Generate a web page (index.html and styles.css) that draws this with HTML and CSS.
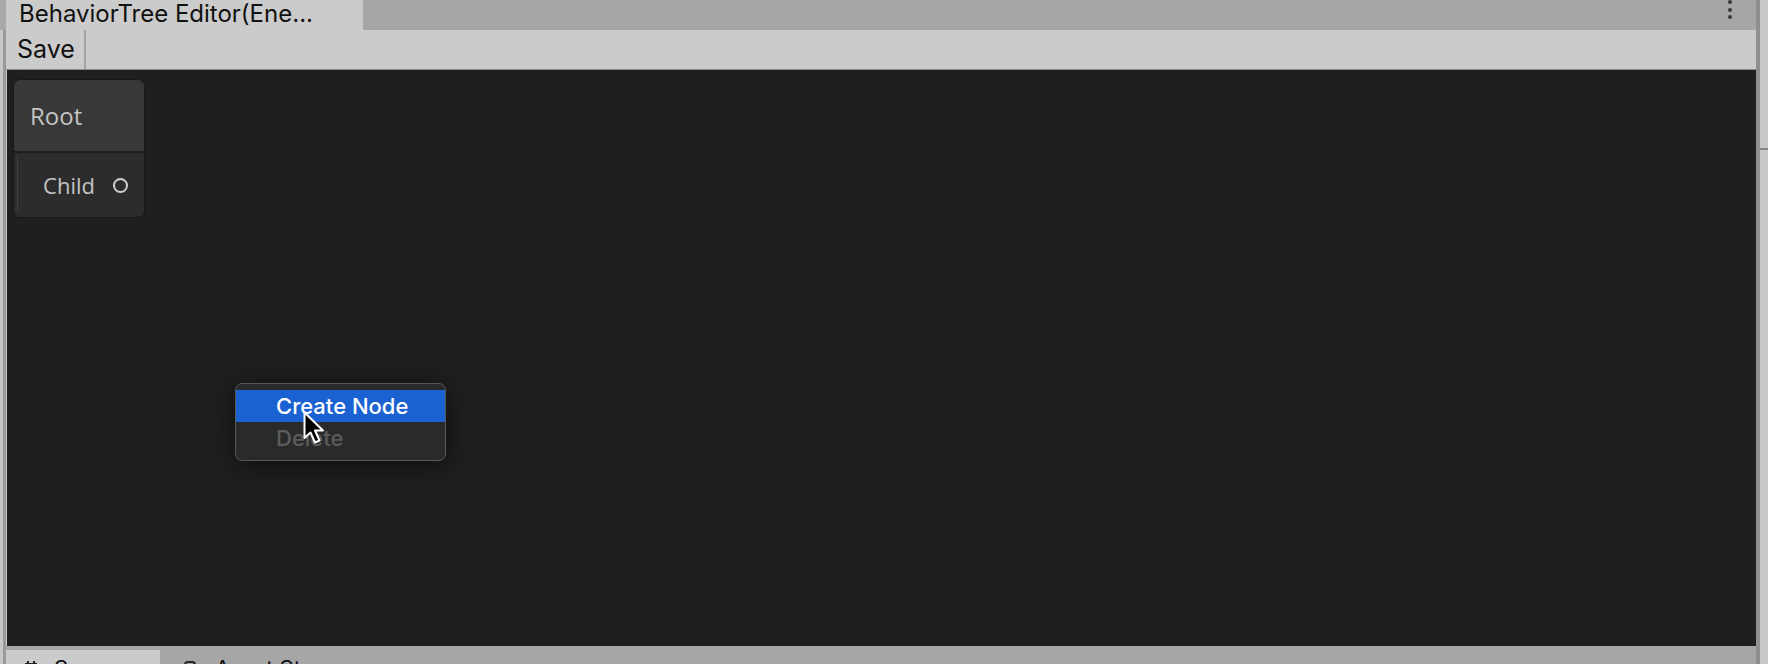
FILE: index.html
```html
<!DOCTYPE html>
<html>
<head>
<meta charset="utf-8">
<link rel="stylesheet" href="styles.css">
</head>
<body>
<div class="app">
  <div class="edge-left"><div class="edge-left-top"></div></div>
  <div class="main">
    <div class="tabbar">
      <div class="tab tab-active">BehaviorTree Editor(Ene...</div>
      <div class="spacer"></div>
      <div class="kebab"><span></span><span></span><span></span></div>
    </div>
    <div class="toolbar">
      <div class="tb-btn">Save</div>
    </div>
    <div class="canvas">
      <div class="node">
        <div class="node-title">Root</div>
        <div class="node-body">
          <div class="node-in"></div>
          <div class="node-out">
            <span class="port-label">Child</span>
            <span class="port"></span>
          </div>
        </div>
      </div>
      <div class="menu">
        <div class="menu-item menu-item-hl">Create Node</div>
        <div class="menu-item menu-item-disabled">Delete</div>
      </div>
      <svg class="cursor" width="26" height="36" viewBox="0 0 26 36">
        <path d="M1.5 1.5 L1.5 27 L7.5 21.5 L12 31.5 L16.5 29.5 L12 19.5 L20 19.5 Z" fill="#000" stroke="#fff" stroke-width="2" stroke-linejoin="round"/>
      </svg>
    </div>
    <div class="bottombar">
      <div class="btab btab-active">
        <svg class="btab-icon" width="14" height="14" viewBox="0 0 14 14"><path d="M4 1V13M10 1V13M1 4H13M1 10H13" stroke="#222" stroke-width="2" fill="none"/></svg>
        <span>Scene</span>
      </div>
      <div class="btab btab-store">
        <svg class="btab-icon" width="14" height="14" viewBox="0 0 14 14"><rect x="2" y="2" width="10" height="11" rx="3" stroke="#222" stroke-width="2" fill="none"/></svg>
        <span>Asset Store</span>
      </div>
      <div class="spacer"></div>
      <div class="kebab kebab-bottom"><span></span><span></span><span></span></div>
    </div>
  </div>
  <div class="edge-right">
    <div class="edge-right-line"></div>
    <div class="edge-right-light"><div class="edge-right-mark"></div></div>
  </div>
</div>
</body>
</html>
```
FILE: styles.css
```css
html, body {
  margin: 0;
  padding: 0;
  background: #c8c8c8;
}
body {
  width: 1768px;
  height: 664px;
  overflow: hidden;
  font-family: "Inter", "Liberation Sans", sans-serif;
}
.app {
  display: flex;
  width: 1768px;
  height: 664px;
}
.edge-left {
  width: 6px;
  flex: none;
  background: linear-gradient(to right, #c6c6c6 0 3px, #999 3px 6px);
  display: flex;
  flex-direction: column;
}
.edge-left-top {
  height: 30px;
  background: #a8a8a8;
}
.main {
  width: 1750px;
  flex: none;
  display: flex;
  flex-direction: column;
}
.tabbar {
  height: 30px;
  background: #a6a6a6;
  display: flex;
  align-items: flex-start;
}
.tab {
  height: 30px;
  box-sizing: border-box;
  font-size: 24px;
  line-height: 27px;
  color: #111;
  white-space: nowrap;
}
.tab-active {
  width: 357px;
  background: #cbcbcb;
  padding-left: 13px;
}
.spacer {
  flex: 1;
}
.kebab {
  width: 4px;
  margin-right: 24px;
  display: flex;
  flex-direction: column;
  gap: 3.5px;
}
.kebab span {
  width: 4px;
  height: 4px;
  border-radius: 50%;
  background: #3a3a3a;
}
.toolbar {
  height: 40px;
  box-sizing: border-box;
  background: #cbcbcb;
  border-bottom: 1px solid #8a8a8a;
  display: flex;
  padding-left: 1px;
}
.tb-btn {
  height: 39px;
  box-sizing: border-box;
  width: 79px;
  padding-left: 10px;
  border-right: 2px solid #a3a3a3;
  font-size: 25px;
  line-height: 38px;
  color: #111;
}
.canvas {
  position: relative;
  height: 576px;
  background: #1f1f1f;
  margin-left: 1px;
  overflow: hidden;
}
.node {
  position: absolute;
  left: 6px;
  top: 9px;
  width: 132px;
  box-sizing: border-box;
  border: 1px solid #181818;
  border-radius: 7px;
  overflow: hidden;
  font-family: "Open Sans", "Noto Sans", sans-serif;
  color: #c4c4c4;
}
.node-title {
  height: 71px;
  line-height: 71px;
  padding-left: 16px;
  font-size: 24px;
  background: #383838;
  border-bottom: 2px solid #1d1d1d;
}
.node-body {
  display: flex;
  height: 64px;
  background: #2c2c2c;
}
.node-in {
  width: 2px;
  margin: 2px 0 6px 1px;
  border-right: 1px solid #3e3e3e;
}
.node-out {
  flex: 1;
  display: flex;
  align-items: center;
  justify-content: flex-end;
  padding-right: 16px;
  gap: 18px;
}
.port-label {
  font-size: 22px;
  line-height: 64px;
}
.port {
  width: 15px;
  height: 15px;
  box-sizing: border-box;
  border: 2.5px solid #cfcfcf;
  border-radius: 50%;
}
.menu {
  position: absolute;
  left: 228px;
  top: 313px;
  width: 211px;
  height: 78px;
  box-sizing: border-box;
  padding: 6px 0;
  background: #2a2a2a;
  border: 1px solid #575757;
  border-radius: 7px;
  box-shadow: 0 4px 26px rgba(0, 0, 0, 0.6);
  overflow: hidden;
}
.menu-item {
  height: 32px;
  line-height: 32px;
  padding-left: 40px;
  font-size: 22px;
  font-weight: 500;
}
.menu-item-hl {
  background: #1a62d2;
  color: #fff;
}
.menu-item-disabled {
  color: #5c5c5c;
}
.cursor {
  position: absolute;
  left: 296px;
  top: 341px;
}
.bottombar {
  height: 18px;
  background: #a6a6a6;
  display: flex;
  padding-top: 4px;
  box-sizing: border-box;
  overflow: hidden;
}
.btab {
  height: 30px;
  flex: none;
  display: flex;
  align-items: flex-start;
  gap: 16px;
  box-sizing: border-box;
  padding-top: 3px;
  font-size: 22px;
  line-height: 30px;
  color: #111;
  white-space: nowrap;
}
.btab-active {
  width: 154px;
  background: #cbcbcb;
  padding-left: 18px;
}
.btab-store {
  padding-left: 23px;
  gap: 18px;
}
.btab-icon {
  margin-top: 7px;
  flex: none;
}
.kebab-bottom {
  margin-top: 8px;
}
.edge-right {
  width: 12px;
  flex: none;
  display: flex;
}
.edge-right-line {
  width: 4px;
  background: #8f8f8f;
}
.edge-right-light {
  flex: 1;
  background: #c8c8c8;
  padding-top: 148px;
}
.edge-right-mark {
  height: 2px;
  background: #858585;
}
```
